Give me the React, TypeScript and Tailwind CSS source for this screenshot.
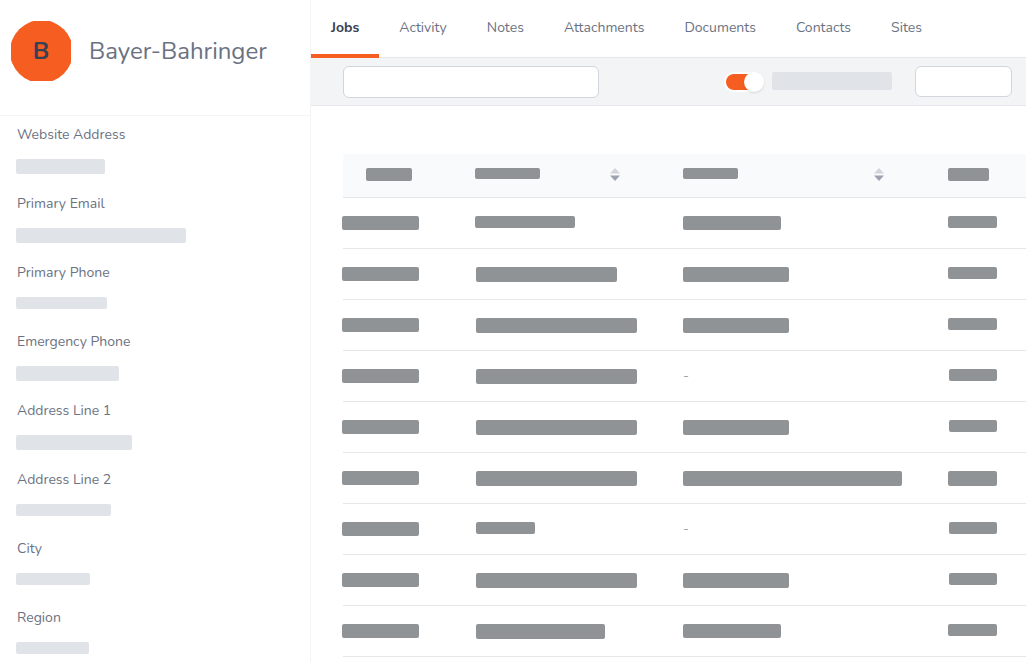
const fields = [
  { label: "Website Address", bar: "w-[89px] h-[15px]" },
  { label: "Primary Email", bar: "w-[170px] h-[15px]" },
  { label: "Primary Phone", bar: "w-[91px] h-[12px]" },
  { label: "Emergency Phone", bar: "w-[103px] h-[15px]" },
  { label: "Address Line 1", bar: "w-[116px] h-[15px]" },
  { label: "Address Line 2", bar: "w-[95px] h-[12px]" },
  { label: "City", bar: "w-[74px] h-[12px]" },
  { label: "Region", bar: "w-[73px] h-[12px]" },
]

const tabs = ["Jobs", "Activity", "Notes", "Attachments", "Documents", "Contacts", "Sites"]

const rows = [
  { name: "w-[100px] h-[12px]", site: "w-[98px] h-[14px]", last: "w-[49px] h-[12px]" },
  { name: "w-[141px] h-[15px] ml-px", site: "w-[106px] h-[15px]", last: "w-[49px] h-[12px]" },
  { name: "w-[161px] h-[15px] ml-px", site: "w-[106px] h-[15px]", last: "w-[49px] h-[12px]" },
  { name: "w-[161px] h-[15px] ml-px", site: "", last: "w-[48px] h-[12px] ml-px" },
  { name: "w-[161px] h-[15px] ml-px", site: "w-[106px] h-[15px]", last: "w-[48px] h-[12px] ml-px" },
  { name: "w-[161px] h-[15px] ml-px", site: "w-[219px] h-[15px]", last: "w-[49px] h-[15px]" },
  { name: "w-[59px] h-[12px] ml-px", site: "", last: "w-[48px] h-[12px] ml-px" },
  { name: "w-[161px] h-[15px] ml-px", site: "w-[106px] h-[15px]", last: "w-[48px] h-[12px] ml-px" },
  { name: "w-[129px] h-[15px] ml-px", site: "w-[98px] h-[14px]", last: "w-[49px] h-[12px]" },
]

function SortIcon() {
  return (
    <svg width="10" height="13" viewBox="0 0 10 13" className="shrink-0">
      <path d="M5 0 L10 5.5 H0 Z" fill="#d1d5db" />
      <path d="M5 13 L10 7.5 H0 Z" fill="#9ca3af" />
    </svg>
  )
}

export default function App() {
  return (
    <div className="flex h-[662px] w-[1026px] overflow-hidden bg-white font-['Nunito','Lato','Noto_Sans',sans-serif]">
      {/* Sidebar */}
      <aside className="w-[311px] shrink-0 border-r border-gray-100">
        <div className="flex h-[116px] items-start gap-[18px] border-b border-gray-100 pl-[11px] pt-[21px]">
          <div className="flex h-[60px] w-[60px] items-center justify-center overflow-hidden">
            <div className="flex h-[63px] w-[63px] shrink-0 items-center justify-center rounded-full bg-[#f55e20] text-2xl font-bold text-gray-700">
              B
            </div>
          </div>
          <h1 className="mt-[14px] text-2xl leading-8 text-gray-500">Bayer-Bahringer</h1>
        </div>
        <div className="flex flex-col gap-[20px] pl-4 pt-[9px]">
          {fields.map((field) => (
            <div key={field.label} className="flex h-[49px] flex-col gap-[14px]">
              <span className="pl-px text-sm leading-5 text-gray-500">{field.label}</span>
              <div className={`rounded-[2px] bg-[#e0e3e8] ${field.bar}`} />
            </div>
          ))}
        </div>
      </aside>

      <main className="min-w-0 flex-1">
        {/* Tabs */}
        <nav className="flex h-[58px] border-b border-gray-200">
          {tabs.map((tab, i) => (
            <div
              key={tab}
              className={`-mb-px flex items-start px-5 pt-[18px] text-sm leading-5 ${
                i === 0 ? "border-b-4 border-[#f55e20] font-bold text-gray-700" : "text-gray-500"
              }`}
            >
              {tab}
            </div>
          ))}
        </nav>

        {/* Toolbar */}
        <div className="flex h-[48px] items-start border-b border-gray-200 bg-gray-100 pl-8 pr-[14px] pt-2">
          <div className="h-8 w-[256px] rounded-md border border-gray-300 bg-white" />
          <div className="ml-[125px] mt-[6px] flex h-5 w-10 items-center rounded-full bg-white px-[2px]">
            <div className="relative h-4 w-full rounded-full bg-[#f55e20]">
              <div className="absolute -right-[2px] -top-[2px] h-5 w-5 rounded-full bg-white shadow" />
            </div>
          </div>
          <div className="ml-2 mt-[6px] h-[18px] w-[120px] rounded-[2px] bg-[#e0e3e8]" />
          <div className="ml-[23px] h-[31px] w-[97px] rounded-md border border-gray-300 bg-white" />
        </div>

        {/* Table */}
        <div className="pl-8 pt-12">
          <div className="grid h-[44px] grid-cols-[132px_208px_265px_1fr] items-start border-b border-gray-200 bg-gray-50 pt-[14px]">
            <div className="ml-[23px] h-[13px] w-[46px] rounded-[2px] bg-[#909396]" />
            <div className="flex items-start justify-between pr-[63px]">
              <div className="h-[11px] w-[65px] rounded-[2px] bg-[#909396]" />
              <SortIcon />
            </div>
            <div className="flex items-start justify-between pr-[64px]">
              <div className="h-[11px] w-[55px] rounded-[2px] bg-[#909396]" />
              <SortIcon />
            </div>
            <div className="h-[13px] w-[41px] rounded-[2px] bg-[#909396]" />
          </div>
          {rows.map((row, i) => (
            <div key={i} className="grid h-[51px] grid-cols-[132px_208px_265px_1fr] items-start border-b border-gray-200 pt-[18px]">
              <div className="-ml-px h-[14px] w-[77px] rounded-[2px] bg-[#909396]" />
              <div className={`rounded-[2px] bg-[#909396] ${row.name}`} />
              {row.site ? (
                <div className={`rounded-[2px] bg-[#909396] ${row.site}`} />
              ) : (
                <span className="-mt-[3px] text-sm leading-5 text-gray-400">-</span>
              )}
              <div className={`rounded-[2px] bg-[#909396] ${row.last}`} />
            </div>
          ))}
        </div>
      </main>
    </div>
  )
}
